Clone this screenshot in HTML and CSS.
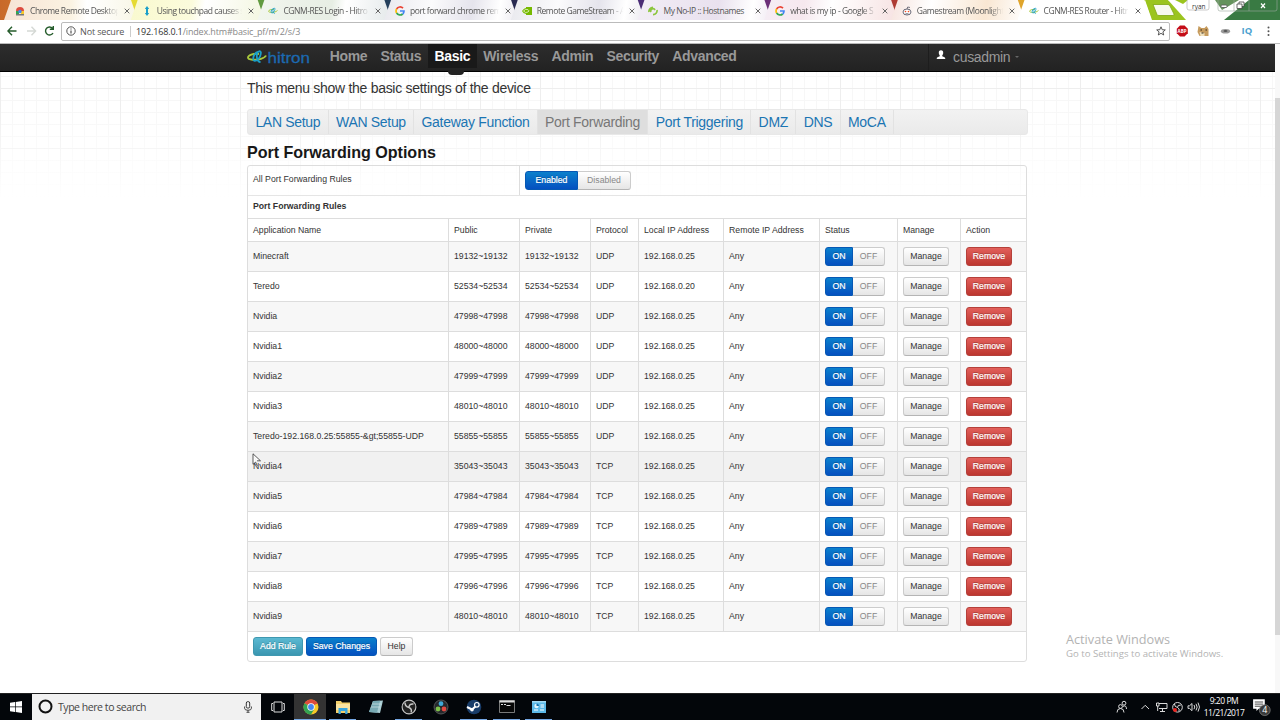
FILE: index.html
```
<!DOCTYPE html>
<html lang="en">

<head>
    <meta charset="UTF-8">
    <meta name="viewport" content="width=device-width, initial-scale=1.0">
    <title>CGNM-RES Router - Hitron Technologies</title>
    <link rel="stylesheet" href="styles.css">
</head>

<body>
    <svg class="symbols" width="0" height="0">
        <symbol id="google" viewBox="0 0 10 10">
            <g fill="none" stroke-width="1.7">
                <path d="M8 2.2A4 4 0 0 0 1.6 3" stroke="#ea4335" />
                <path d="M1.6 3a4 4 0 0 0 0 4" stroke="#fbbc05" />
                <path d="M1.6 7A4 4 0 0 0 7.7 8" stroke="#34a853" />
                <path d="M7.7 8A4 4 0 0 0 9 5H5" stroke="#4285f4" />
            </g>
        </symbol>
        <symbol id="hitron" viewBox="0 0 20 14">
            <g fill="none">
                <path d="M12 4C6 3 1 5.500 1 7.500c0 2.500 8 3 13 1.300 3-1 4.500-2 5-3.300" stroke="#a8c83c" stroke-width="1.900" />
                <path d="M11 2C8 2.500 5.500 7 6.500 10c.8 2 5 .5 6.500-3.500S14 1 12 1.300s-2.500 4-2 6.700 1.500 4 3.500 4" stroke="#1a9fc8" stroke-width="1.800" />
            </g>
        </symbol>
        <symbol id="close" viewBox="0 0 6 6">
            <path d="M.7.7l4.600 4.600M5.300.7L.7 5.300" stroke="#666" stroke-width="1" />
        </symbol>
        <symbol id="chrome" viewBox="0 0 16 16">
            <circle cx="8" cy="8" r="7.500" fill="#f7c928" />
            <path d="M8 8L1.500 4.200A7.500 7.500 0 0 1 14.500 4.200z" fill="#dd4b3e" />
            <path d="M8 8L1.500 4.200A7.500 7.500 0 0 0 8 15.500l3-5z" fill="#33a352" />
            <path d="M8 4.300h6.600" stroke="#dd4b3e" />
            <circle cx="8" cy="8" r="3.700" fill="#fff" />
            <circle cx="8" cy="8" r="2.900" fill="#4688f1" />
        </symbol>
    </svg>

    <div class="tab-strip">
        <div class="tab tab-orange">
            <svg class="favicon" viewBox="0 0 10 10"><path d="M1 5a4 4 0 0 1 8 0z" fill="#dd4b3e" /><path d="M1 5h3v3H1z" fill="#33a352" /><path d="M6 5h3v3H6z" fill="#f7c928" /><circle cx="5" cy="5.500" r="1.700" fill="#4688f1" /><path d="M1 8h8v1.500H1z" fill="#777" /></svg>
            <span class="tab-title">Chrome Remote Desktop</span><svg class="tab-close"><use href="#close" /></svg>
        </div>
        <div class="tab tab-yellow">
            <svg class="favicon" viewBox="0 0 10 10"><path d="M5 0l2.200 3H6v4h1.200L5 10 2.800 7H4V3H2.800z" fill="#1b9fc9" /></svg>
            <span class="tab-title">Using touchpad causes s</span><svg class="tab-close"><use href="#close" /></svg>
        </div>
        <div class="tab tab-green">
            <svg class="favicon"><use href="#hitron" /></svg>
            <span class="tab-title">CGNM-RES Login - Hitro</span><svg class="tab-close"><use href="#close" /></svg>
        </div>
        <div class="tab tab-gray">
            <svg class="favicon"><use href="#google" /></svg>
            <span class="tab-title">port forward chrome rem</span><svg class="tab-close"><use href="#close" /></svg>
        </div>
        <div class="tab tab-gray">
            <svg class="favicon" viewBox="0 0 10 10"><path d="M0 5q2-3 4-3V1h6v8H4V8Q1 7.500 0 5z" fill="#76b900" /><path d="M1.500 5q2-2.500 4.500-1.300Q8 5 6 6 3.500 7.500 1.500 5z" fill="none" stroke="#e8f5cf" stroke-width=".8" /></svg>
            <span class="tab-title">Remote GameStream - A</span><svg class="tab-close"><use href="#close" /></svg>
        </div>
        <div class="tab tab-lilac">
            <svg class="favicon" viewBox="0 0 10 10"><path d="M1 6A4 4 0 0 1 5 1.300M9 4a4 4 0 0 1-4 4.700M3 6a2.200 2.200 0 0 1 4-2" fill="none" stroke="#8dc63f" stroke-width="1.700" /></svg>
            <span class="tab-title full">My No-IP :: Hostnames</span><svg class="tab-close"><use href="#close" /></svg>
        </div>
        <div class="tab tab-pink">
            <svg class="favicon"><use href="#google" /></svg>
            <span class="tab-title">what is my ip - Google S</span><svg class="tab-close"><use href="#close" /></svg>
        </div>
        <div class="tab tab-peach">
            <svg class="favicon" viewBox="0 0 10 10"><ellipse cx="5" cy="6" rx="4" ry="3" fill="#fff" stroke="#445" stroke-width=".8" /><path d="M5 3l.7-2L8 1.500" stroke="#445" stroke-width=".7" fill="none" /><circle cx="3.500" cy="5.500" r=".8" fill="#f54a1d" /><circle cx="6.500" cy="5.500" r=".8" fill="#f54a1d" /><path d="M3.500 7.300q1.500 1 3 0" stroke="#445" stroke-width=".6" fill="none" /></svg>
            <span class="tab-title">Gamestream (Moonlight</span><svg class="tab-close"><use href="#close" /></svg>
        </div>
        <div class="tab tab-active">
            <svg class="favicon"><use href="#hitron" /></svg>
            <span class="tab-title">CGNM-RES Router - Hitr</span><svg class="tab-close"><use href="#close" /></svg>
        </div>
        <svg class="window-corner" viewBox="0 0 135 20" preserveAspectRatio="none">
            <path d="M0 0h135v20H0z" fill="#fff" />
            <path d="M0 0h23l18 20H7z" fill="#9bc41e" />
            <path d="M23 0h45L45 12z" fill="#fff" />
            <path d="M30 0h13l-5 4z" fill="#9bc41e" />
            <path d="M70 0h24l-17 10z" fill="#65935d" />
            <path d="M104 0h31v20H79z" fill="#397a43" />
            <path d="M8 4.500h15q1.500 0 2 1.500l4 8q.5 1.500-1 1.500H14q-1.500 0-2-1z" fill="#f7f9ed" stroke="#7ea611" stroke-width=".8" />
            <rect x="42" y="-2" width="22" height="12" rx="2" fill="#fff" fill-opacity=".5" stroke="#aaa" stroke-width=".6" />
            <text x="47" y="8.500" class="profile-name">ryan</text>
            <path d="M73 0v9q0 2 2 2h55q2 0 2-2V0M89 0v11M104 0v11" stroke="#9baa9e" stroke-width=".6" fill="none" />
            <rect x="76" y="5" width="6" height="2.500" rx="1" fill="#fff" stroke="#555" stroke-width=".8" />
            <path d="M92 4h5v4.500h-5zM94 4V2h5v4.500h-2" fill="#fff" stroke="#444" stroke-width=".8" />
            <path d="M116 3.500l4 4.500m0-4.500L116 8" stroke="#fff" stroke-width="1.200" />
        </svg>
    </div>

    <div class="toolbar">
        <svg class="nav-icons" viewBox="0 0 50 12">
            <g fill="none" stroke-width="1.400">
                <path d="M9.500 6H1M5 1.800L.9 6 5 10.200" stroke="#255c2b" />
                <path d="M20 6h8.500M24.500 1.800L28.600 6l-4.100 4.200" stroke="#d5d9d5" />
                <path d="M45.500 3.300A4 4 0 1 0 46 8M46.300 1v3.300h-3.500" stroke="#255c2b" />
            </g>
        </svg>
        <div class="address">
            <svg class="info" viewBox="0 0 10 10"><circle cx="5" cy="5" r="4.200" fill="none" stroke="#444" stroke-width=".9" /><path d="M5 4.400v3M5 2.400v1" stroke="#444" stroke-width="1.100" /></svg>
            <span class="not-secure">Not secure</span>
            <span class="url">192.168.0.1<span>/index.htm#basic_pf/m/2/s/3</span></span>
            <svg class="star" viewBox="0 0 10 10"><path d="M5 .8l1.200 2.900 3.100.2-2.400 2 .8 3.100L5 7.300 2.300 9l.8-3.100-2.400-2 3.100-.2z" fill="none" stroke="#444" stroke-width=".9" /></svg>
        </div>
        <svg class="extensions" viewBox="0 0 110 14">
            <path d="M10 1.500h4.600l3.200 3.200v4.600l-3.200 3.200H10L6.800 9.300V4.700z" fill="#c40d18" />
            <text x="7.600" y="8.800" class="abp">ABP</text>
            <path d="M28.500 2l3 2h3l2-2 2 3v7h-9l-2-4z" fill="#c69b5d" />
            <path d="M29.500 8l5 1v3h-4z" fill="#eee0bd" /><path d="M30.500 6h1.500M35.500 6H37M31.500 9h2" stroke="#34281b" />
            <ellipse cx="55.500" cy="7.300" rx="4.600" ry="2.300" fill="#999" /><ellipse cx="55.500" cy="7" rx="2" ry="1" fill="#555" />
            <text x="71.500" y="10.300" class="iq">IQ</text>
            <g fill="#555"><circle cx="98.500" cy="3.500" r="1" /><circle cx="98.500" cy="7.300" r="1" /><circle cx="98.500" cy="11" r="1" /></g>
        </svg>
    </div>

    <div class="viewport">
        <div class="navbar">
            <svg class="logo" viewBox="0 0 64 16">
                <use href="#hitron" x="0" y="1" width="20" height="14" />
                <text x="20.500" y="13.500" textLength="42.500" lengthAdjust="spacingAndGlyphs">hitron</text>
            </svg>
            <ul class="main-nav">
                <li>Home</li>
                <li>Status</li>
                <li class="active">Basic</li>
                <li>Wireless</li>
                <li>Admin</li>
                <li>Security</li>
                <li>Advanced</li>
            </ul>
            <div class="user">
                <svg class="user-icon" viewBox="0 0 10 10"><path d="M5 .3c1.600 0 2.300 1 2.200 2.600C7.100 4.200 6.500 5 6.200 5.500v.8C8 7 9.300 7.200 9.300 9H.7c0-1.800 1.300-2 3.100-2.700v-.8C3.500 5 2.900 4.200 2.800 2.900 2.700 1.300 3.400.3 5 .3z" fill="#fff" /></svg>
                <span>cusadmin</span>
                <i class="caret"></i>
            </div>
            <div class="heading-tail"></div>
        </div>

        <div class="container">
            <p class="lead">This menu show the basic settings of the device</p>
            <ul class="sub-nav">
                <li>LAN Setup</li>
                <li>WAN Setup</li>
                <li>Gateway Function</li>
                <li class="active">Port Forwarding</li>
                <li>Port Triggering</li>
                <li>DMZ</li>
                <li>DNS</li>
                <li>MoCA</li>
            </ul>
            <h3>Port Forwarding Options</h3>

            <div class="panel">
                <div class="all-rules">
                    <div class="all-rules-label">All Port Forwarding Rules</div>
                    <div class="btn-group wide"><span class="btn btn-primary">Enabled</span><span class="btn off">Disabled</span></div>
                </div>
                <div class="rules-title">Port Forwarding Rules</div>
                <table class="rules">
                    <colgroup>
                        <col class="c-name"><col class="c-public"><col class="c-private"><col class="c-protocol"><col class="c-local"><col class="c-remote"><col class="c-status"><col class="c-manage"><col class="c-action">
                    </colgroup>
                    <thead>
                        <tr><th>Application Name</th><th>Public</th><th>Private</th><th>Protocol</th><th>Local IP Address</th><th>Remote IP Address</th><th>Status</th><th>Manage</th><th>Action</th></tr>
                    </thead>
                    <tbody>
                        <tr>
                            <td>Minecraft</td><td>19132~19132</td><td>19132~19132</td><td>UDP</td><td>192.168.0.25</td><td>Any</td>
                            <td><div class="btn-group"><span class="btn btn-primary">ON</span><span class="btn off">OFF</span></div></td>
                            <td><span class="btn">Manage</span></td><td><span class="btn btn-danger">Remove</span></td>
                        </tr>
                        <tr>
                            <td>Teredo</td><td>52534~52534</td><td>52534~52534</td><td>UDP</td><td>192.168.0.20</td><td>Any</td>
                            <td><div class="btn-group"><span class="btn btn-primary">ON</span><span class="btn off">OFF</span></div></td>
                            <td><span class="btn">Manage</span></td><td><span class="btn btn-danger">Remove</span></td>
                        </tr>
                        <tr>
                            <td>Nvidia</td><td>47998~47998</td><td>47998~47998</td><td>UDP</td><td>192.168.0.25</td><td>Any</td>
                            <td><div class="btn-group"><span class="btn btn-primary">ON</span><span class="btn off">OFF</span></div></td>
                            <td><span class="btn">Manage</span></td><td><span class="btn btn-danger">Remove</span></td>
                        </tr>
                        <tr>
                            <td>Nvidia1</td><td>48000~48000</td><td>48000~48000</td><td>UDP</td><td>192.168.0.25</td><td>Any</td>
                            <td><div class="btn-group"><span class="btn btn-primary">ON</span><span class="btn off">OFF</span></div></td>
                            <td><span class="btn">Manage</span></td><td><span class="btn btn-danger">Remove</span></td>
                        </tr>
                        <tr>
                            <td>Nvidia2</td><td>47999~47999</td><td>47999~47999</td><td>UDP</td><td>192.168.0.25</td><td>Any</td>
                            <td><div class="btn-group"><span class="btn btn-primary">ON</span><span class="btn off">OFF</span></div></td>
                            <td><span class="btn">Manage</span></td><td><span class="btn btn-danger">Remove</span></td>
                        </tr>
                        <tr>
                            <td>Nvidia3</td><td>48010~48010</td><td>48010~48010</td><td>UDP</td><td>192.168.0.25</td><td>Any</td>
                            <td><div class="btn-group"><span class="btn btn-primary">ON</span><span class="btn off">OFF</span></div></td>
                            <td><span class="btn">Manage</span></td><td><span class="btn btn-danger">Remove</span></td>
                        </tr>
                        <tr>
                            <td>Teredo-192.168.0.25:55855-&amp;gt;55855-UDP</td><td>55855~55855</td><td>55855~55855</td><td>UDP</td><td>192.168.0.25</td><td>Any</td>
                            <td><div class="btn-group"><span class="btn btn-primary">ON</span><span class="btn off">OFF</span></div></td>
                            <td><span class="btn">Manage</span></td><td><span class="btn btn-danger">Remove</span></td>
                        </tr>
                        <tr class="hover">
                            <td>Nvidia4</td><td>35043~35043</td><td>35043~35043</td><td>TCP</td><td>192.168.0.25</td><td>Any</td>
                            <td><div class="btn-group"><span class="btn btn-primary">ON</span><span class="btn off">OFF</span></div></td>
                            <td><span class="btn">Manage</span></td><td><span class="btn btn-danger">Remove</span></td>
                        </tr>
                        <tr>
                            <td>Nvidia5</td><td>47984~47984</td><td>47984~47984</td><td>TCP</td><td>192.168.0.25</td><td>Any</td>
                            <td><div class="btn-group"><span class="btn btn-primary">ON</span><span class="btn off">OFF</span></div></td>
                            <td><span class="btn">Manage</span></td><td><span class="btn btn-danger">Remove</span></td>
                        </tr>
                        <tr>
                            <td>Nvidia6</td><td>47989~47989</td><td>47989~47989</td><td>TCP</td><td>192.168.0.25</td><td>Any</td>
                            <td><div class="btn-group"><span class="btn btn-primary">ON</span><span class="btn off">OFF</span></div></td>
                            <td><span class="btn">Manage</span></td><td><span class="btn btn-danger">Remove</span></td>
                        </tr>
                        <tr>
                            <td>Nvidia7</td><td>47995~47995</td><td>47995~47995</td><td>TCP</td><td>192.168.0.25</td><td>Any</td>
                            <td><div class="btn-group"><span class="btn btn-primary">ON</span><span class="btn off">OFF</span></div></td>
                            <td><span class="btn">Manage</span></td><td><span class="btn btn-danger">Remove</span></td>
                        </tr>
                        <tr>
                            <td>Nvidia8</td><td>47996~47996</td><td>47996~47996</td><td>TCP</td><td>192.168.0.25</td><td>Any</td>
                            <td><div class="btn-group"><span class="btn btn-primary">ON</span><span class="btn off">OFF</span></div></td>
                            <td><span class="btn">Manage</span></td><td><span class="btn btn-danger">Remove</span></td>
                        </tr>
                        <tr>
                            <td>Nvidia9</td><td>48010~48010</td><td>48010~48010</td><td>TCP</td><td>192.168.0.25</td><td>Any</td>
                            <td><div class="btn-group"><span class="btn btn-primary">ON</span><span class="btn off">OFF</span></div></td>
                            <td><span class="btn">Manage</span></td><td><span class="btn btn-danger">Remove</span></td>
                        </tr>
                    </tbody>
                </table>
                <div class="actions">
                    <span class="btn btn-info">Add Rule</span>
                    <span class="btn btn-primary btn-save">Save Changes</span>
                    <span class="btn btn-help">Help</span>
                </div>
            </div>
        </div>
        <div class="scrollbar"></div>
    </div>

    <div class="taskbar">
        <div class="start">
            <svg width="12" height="12" viewBox="0 0 12 12"><path d="M0 1.700l5-.7v4.600H0zM5.700.9L12 0v5.600H5.700zM0 6.300h5v4.600l-5-.7zM5.700 6.300H12V12l-6.300-.9z" fill="#fff" /></svg>
        </div>
        <div class="search">
            <svg width="15" height="15" viewBox="0 0 15 15"><circle cx="7.500" cy="7.500" r="6" fill="none" stroke="#111" stroke-width="2" /></svg>
            <span>Type here to search</span>
            <svg width="8" height="12" viewBox="0 0 8 12"><rect x="2.300" y=".6" width="3.400" height="6.500" rx="1.500" fill="none" stroke="#333" /><path d="M.6 5.500v1.800q0 2 3.400 2t3.400-2V5.500M4 9.300V11M2.500 11.300h3" fill="none" stroke="#333" stroke-width=".9" /></svg>
        </div>
        <div class="task">
            <svg width="14" height="12" viewBox="0 0 14 12"><path d="M3 1h8v10H3zM2 2.500H.7v7H2M12 2.500h1.300v7H12" fill="none" stroke="#ddd" /></svg>
        </div>
        <div class="task current"><svg width="16" height="16"><use href="#chrome" /></svg></div>
        <div class="task open">
            <svg width="16" height="14" viewBox="0 0 16 14"><path d="M1 1h5l1 1.500h8V13H1z" fill="#f3cf6b" /><path d="M1 4h14v6H1z" fill="#fae3a0" /><path d="M3.500 14V8h9v6h-2.300v-3H5.800v3z" fill="#39a5dd" /></svg>
        </div>
        <div class="task">
            <svg width="16" height="16" viewBox="0 0 16 16"><path d="M5 2l10-.5-3 12.500-11-1z" fill="#a9cdd3" /><path d="M5 2l7-.3-3 12L1 13z" fill="#78aab3" /><path d="M4 5h9M3 8h9" stroke="#d3e6e8" stroke-width=".7" /></svg>
        </div>
        <div class="task open">
            <svg width="16" height="16" viewBox="0 0 16 16"><circle cx="8" cy="8" r="6.900" fill="#222" stroke="#c8c8c8" stroke-width="1.100" /><path d="M8 8.500Q4 7.500 4 3.500M8 8.500q0-4 4.500-3.500M8 8.500q3.500 1.500 2 5" fill="none" stroke="#c8c8c8" stroke-width="1.400" /></svg>
        </div>
        <div class="task">
            <svg width="16" height="16" viewBox="0 0 16 16"><circle cx="8" cy="8" r="7" fill="#26292d" stroke="#656565" stroke-width=".8" /><circle cx="8" cy="4.700" r="2.400" fill="#3fa9d8" /><circle cx="5" cy="10" r="2.400" fill="#7fc24a" /><circle cx="11" cy="10" r="2.400" fill="#e34a42" /></svg>
        </div>
        <div class="task open">
            <svg width="16" height="16" viewBox="0 0 16 16"><circle cx="8" cy="8" r="7.300" fill="#193d6a" /><path d="M1 8l5 2.500L10 7" stroke="#fff" stroke-width="2" fill="none" /><circle cx="10.800" cy="5.800" r="2.300" fill="#193d6a" stroke="#fff" stroke-width="1.200" /><circle cx="6" cy="10.800" r="1.800" fill="#fff" /></svg>
        </div>
        <div class="task open">
            <svg width="16" height="13" viewBox="0 0 16 13"><path d="M.5.500h15v12H.5z" fill="#080808" stroke="#aaa" stroke-width=".7" /><path d="M.5 1.500h15" stroke="#ddd" stroke-width="2" /><path d="M2 4.500h2M5 4.500h2M7.500 5.500h4" stroke="#ddd" /></svg>
        </div>
        <div class="task open">
            <svg width="14" height="12" viewBox="0 0 14 12"><path d="M0 0h14v12H0z" fill="#5cb9e8" /><path d="M0 0h14v1.500H0z" fill="#a3daf3" /><circle cx="4.500" cy="5" r="2.200" fill="#e2f4fc" /><path d="M4.500 5V2.500A2.500 2.500 0 0 1 7 5z" fill="#1672ac" /><path d="M8.500 4H12M8.500 6H12M2 9h4M8 9h4" stroke="#fff" /></svg>
        </div>

        <div class="tray">
            <svg class="tray-icons" viewBox="0 0 86 14">
                <g fill="none" stroke="#e5e5e5" stroke-width=".95">
                    <circle cx="4.500" cy="6.500" r="1.900" /><path d="M1 12.500q0-4 3.500-4t3.500 4" /><circle cx="8" cy="3.200" r="1.900" /><path d="M6.800 6.500q3.500-2 3.700 2.500" />
                    <path d="M25.500 9l3.700-3.700L33 9" />
                    <path d="M43 3.500h8v5h-8M46.500 9v2.500m-2.500 0h5M40.500 3h2.500v3h-2.500zM41.700 6v5" />
                    <circle cx="61.500" cy="7.300" r="4.800" /><path d="M61.500 7.500q-3-.5-3-3.500M61.500 7.500q0-3 3.200-2.300M61.500 7.500q2.500 1 1.500 3.700" />
                    <path d="M72 5.800h1.500L76 3.500v7.200l-2.500-2.300H72zM78 5q1.500 2 0 4.200M80 3.800q2.300 3.300 0 6.600M82 2.600q3 4.500 0 9" />
                </g>
                <circle cx="59" cy="10" r="2" fill="#e8251f" />
            </svg>
            <div class="clock"><span>9:20 PM</span><span>11/21/2017</span></div>
            <svg class="notice" viewBox="0 0 18 18">
                <path d="M1 2h10.500v8.500H6L4 12.700v-2.200H1z" fill="#fff" /><path d="M2.500 4.500H10M2.500 6.400H10M2.500 8.300H8" stroke="#333" stroke-width=".8" />
                <circle cx="11.500" cy="11.800" r="4.900" fill="#3b3b3b" stroke="#888" stroke-width=".6" /><text x="9.300" y="14.700">4</text>
            </svg>
        </div>
    </div>

    <div class="watermark"><b>Activate Windows</b><span>Go to Settings to activate Windows.</span></div>
    <svg class="cursor" viewBox="0 0 10 14"><path d="M1 .8v10.500l2.600-2.200 1.700 3.700M1 .8l7.500 7H5" fill="#fff" stroke="#333" stroke-width=".8" /></svg>
</body>

</html>
```
FILE: styles.css
```
* {
    box-sizing: border-box;
}

body {
    margin: 0;
    width: 1280px;
    height: 720px;
    overflow: hidden;
    display: flex;
    flex-direction: column;
    background: #fff;
    color: #333;
    font-family: "Liberation Sans", Arial, sans-serif;
    font-size: 8.71px;
}

ul,
p,
h3 {
    margin: 0;
    padding: 0;
    list-style: none;
}

svg {
    display: block;
    flex: none;
}

.symbols {
    position: absolute;
}

/* browser */
.tab-strip {
    display: flex;
    height: 20px;
    padding-left: 4px;
    background: linear-gradient(90deg, #c8692a 0, #d98f34 90px, #ecd832 125px, #d9df31 150px, #5d9638 250px, #67a04c 275px, #24435e 370px, #27294f 510px, #4b2d76 640px, #6b2f7a 765px, #9c3541 870px, #b23c30 900px, #e0a42c 1020px, #9bc41e 1150px);
    font-family: "Open Sans", sans-serif;
}

.tab {
    flex: none;
    display: flex;
    align-items: center;
    width: 133.700px;
    height: 20px;
    margin-right: -7px;
    padding: 1px 10px 0 11px;
    clip-path: polygon(7px 0, 127px 0, 134px 100%, 0 100%);
    color: #555;
    font-size: 8.500px;
}

.tab-orange {
    background: linear-gradient(90deg, #f6e3d5, #fbf3e2 50%, #fff 62%, #f8f6e6);
}

.tab-yellow {
    background: linear-gradient(100deg, #f9f9cf, #fbfbdc 45%, #fff 55%, #f3f6e0);
}

.tab-green {
    background: linear-gradient(100deg, #f2f6ee, #e7eee4 55%, #fff 65%, #e4e9ea);
}

.tab-gray {
    background: linear-gradient(100deg, #e9e9ee, #fbfbfc 35%, #e5e4ec 65%, #fff 85%, #ebe9ef);
}

.tab-lilac {
    background: linear-gradient(100deg, #f2edf6, #e9e1ee 60%, #fff 85%, #f1eaf3);
}

.tab-pink {
    background: linear-gradient(100deg, #f5edf5, #f6e8ee 30%, #fff 50%, #f6e2e2);
}

.tab-peach {
    background: linear-gradient(100deg, #f6e4df, #fff 30%, #f9e7d3 70%, #fff);
}

.tab-active {
    background: #fff;
}

.favicon {
    width: 10px;
    height: 10px;
}

.tab-title {
    flex: 1;
    margin: 0 4px 0 5px;
    white-space: nowrap;
    letter-spacing: -0.450px;
    -webkit-mask-image: linear-gradient(90deg, #000 82%, transparent 98%);
    mask-image: linear-gradient(90deg, #000 82%, transparent 98%);
}

.tab-title.full {
    -webkit-mask-image: none;
    mask-image: none;
}

.tab-close {
    width: 6px;
    height: 6px;
}

.window-corner {
    width: 135px;
    height: 20px;
    margin-left: auto;
}

.profile-name {
    font-size: 6.500px;
    fill: #333;
}

.toolbar {
    display: flex;
    align-items: center;
    flex: none;
    height: 24px;
    padding: 0 0 1px 7px;
    background: #fff;
    border-bottom: 1px solid #bbb;
    font-family: "Open Sans", sans-serif;
}

.nav-icons {
    width: 50px;
    height: 12px;
    margin-right: 4px;
}

.address {
    display: flex;
    align-items: center;
    width: 1110px;
    height: 19px;
    padding: 0 3px 0 4px;
    border: 1px solid #bbb;
    border-radius: 2px;
    font-size: 9px;
    letter-spacing: -0.150px;
}

.info {
    width: 10px;
    height: 10px;
    margin-right: 4px;
}

.not-secure {
    width: 51px;
    border-right: 1px solid #ccc;
    line-height: 11px;
    color: #555;
}

.url {
    margin-left: 5px;
    color: #333;
}

.url span {
    color: #888;
}

.star {
    width: 10px;
    height: 10px;
    margin-left: auto;
}

.extensions {
    width: 110px;
    height: 14px;
}

.abp {
    font-size: 4.500px;
    font-weight: bold;
    fill: #fff;
}

.iq {
    font-size: 9.500px;
    font-weight: bold;
    fill: #4c9fd0;
}

/* router page */
.viewport {
    position: relative;
    flex: none;
    height: 649px;
    background:
        linear-gradient(rgba(255, 255, 255, 0) 60px, #fff 155px),
        linear-gradient(90deg, #eee 1px, transparent 1px) 0 0 / 60px 60px,
        linear-gradient(#eee 1px, transparent 1px) 0 44px / 60px 60px,
        linear-gradient(90deg, #f7f7f7 1px, transparent 1px) 0 0 / 12px 12px,
        linear-gradient(#f7f7f7 1px, transparent 1px) 0 8px / 12px 12px;
}

.navbar {
    position: relative;
    display: flex;
    width: 1275px;
    height: 28px;
    padding-left: 247px;
    background: linear-gradient(#2d2d2d, #222);
    border-bottom: 1px solid #000;
    color: #999;
    font-size: 14px;
    letter-spacing: -0.330px;
    line-height: 25px;
}

.logo {
    width: 64px;
    height: 16px;
    margin: 5px 12px 0 0;
}

.logo text {
    fill: #1c6ab0;
    font-size: 15.500px;
    letter-spacing: 0;
    stroke: #1c6ab0;
    stroke-width: 0.300px;
}

.main-nav {
    display: flex;
    font-weight: bold;
}

.main-nav li {
    padding: 0 6.500px 0 6.700px;
}

.main-nav .active {
    height: 24px;
    background: #191919;
    color: #fff;
}

.user {
    display: flex;
    align-items: center;
    width: 110px;
    height: 27px;
    margin-left: auto;
    margin-right: 237px;
    padding-left: 7px;
    border-left: 1px solid #1d1d1d;
}

.user-icon {
    width: 10px;
    height: 10px;
    margin: 0 7px 5px 0;
}

.caret {
    margin-left: 5px;
    margin-bottom: 2px;
    border: 2.500px solid transparent;
    border-top-color: #666;
    border-bottom: 0;
}

.heading-tail {
    position: absolute;
    left: 448px;
    top: 27px;
    width: 16px;
    height: 4px;
    background: #222;
    border-radius: 0 0 8px 8px;
}

.container {
    width: 781px;
    margin-left: 247px;
}

.lead {
    padding-top: 7px;
    font-size: 14px;
    letter-spacing: -0.290px;
    line-height: 19px;
}

.sub-nav {
    display: flex;
    height: 26px;
    margin-top: 11px;
    background: linear-gradient(#f2f2f2, #eaeaea);
    border: 1px solid #e8e8e8;
    border-radius: 3px;
    font-size: 14px;
    letter-spacing: -0.310px;
    line-height: 24px;
}

.sub-nav li {
    padding: 0 7.300px 0 7.400px;
    border-right: 1px solid #e2e2e2;
    color: #1b75b3;
    white-space: nowrap;
}

.sub-nav .active {
    background: #dedede;
    color: #777;
}

h3 {
    height: 30px;
    color: #181818;
    font-size: 16.100px;
    letter-spacing: -0.030px;
    line-height: 35px;
    white-space: nowrap;
}

.panel {
    width: 780px;
    height: 497px;
    border: 1px solid #ddd;
    border-radius: 3px;
}

.all-rules {
    display: flex;
    align-items: center;
    height: 30px;
    border-bottom: 1px solid #e5e5e5;
}

.all-rules-label {
    width: 272px;
    height: 29px;
    padding-left: 5px;
    border-right: 1px solid #ddd;
    line-height: 27px;
}

.rules-title {
    height: 23px;
    padding-left: 5px;
    border-bottom: 1px solid #ddd;
    font-weight: bold;
    line-height: 21px;
}

.rules {
    width: 778px;
    table-layout: fixed;
    border-collapse: separate;
    border-spacing: 0;
}

.c-name { width: 201px; }
.c-public { width: 71px; }
.c-private { width: 71px; }
.c-protocol { width: 48px; }
.c-local { width: 85px; }
.c-remote { width: 96px; }
.c-status { width: 78px; }
.c-manage { width: 63px; }
.c-action { width: 65px; }

.rules th,
.rules td {
    height: 30px;
    padding: 0 0 1px 5px;
    border-right: 1px solid #ddd;
    border-bottom: 1px solid #ddd;
    font-weight: normal;
    text-align: left;
    vertical-align: middle;
    white-space: nowrap;
}

.rules th {
    height: 23px;
    padding-bottom: 0;
}

.rules th:last-child,
.rules td:last-child {
    border-right: 0;
}

.rules tbody tr:nth-child(odd) {
    background: #f7f7f7;
}

.rules tbody .hover {
    background: #f1f1f1;
}

.btn-group {
    display: flex;
}

.btn {
    display: block;
    width: 46px;
    height: 19px;
    background: linear-gradient(#fff, #e6e6e6);
    border: 1px solid #ccc;
    border-bottom-color: #b5b5b5;
    border-radius: 3px;
    line-height: 17px;
    text-align: center;
    color: #333;
}

.btn-group .btn {
    width: 32px;
    border-radius: 0 3px 3px 0;
}

.btn-group .btn-primary {
    width: 28px;
    border-radius: 3px 0 0 3px;
}

.btn-group.wide {
    margin-left: 5px;
}

.btn-group.wide .btn {
    width: 53px;
}

.btn.off {
    border-left: 0;
    color: #888;
}

.btn-primary,
.btn-danger,
.btn-info {
    color: #fff;
    text-shadow: 0 -1px 0 rgba(0, 0, 0, 0.25);
    -webkit-text-stroke: 0.200px #fff;
}

.btn-primary {
    background: linear-gradient(#0a80cc, #0550c0);
    border-color: #0658b4;
}

.btn-danger {
    background: linear-gradient(#e2605b, #bd362f);
    border-color: #b5403a;
}

.btn-info {
    width: 50px;
    background: linear-gradient(#5bb9d2, #3a96b0);
    border-color: #3f98b0;
}

.actions {
    display: flex;
    gap: 3px;
    padding: 5px;
}

.btn-save {
    width: 71px;
}

.btn-help {
    width: 33px;
}

.scrollbar {
    position: absolute;
    right: 0;
    top: 0;
    width: 5px;
    height: 649px;
    background: linear-gradient(#d6d6d6, #d6d6d6) 0 54px / 5px 537px no-repeat #f8f8f8;
}

/* windows */
.taskbar {
    display: flex;
    flex: none;
    height: 27px;
    background: #03060a;
    border-top: 1px solid #222;
    font-family: "Open Sans", sans-serif;
}

.start,
.task {
    display: flex;
    align-items: center;
    justify-content: center;
    width: 32px;
}

.search {
    display: flex;
    align-items: center;
    width: 229px;
    padding: 0 9px 1px 6px;
    background: #f1f1f1;
    color: #444;
    font-size: 10.500px;
}

.search span {
    flex: 1;
    margin-left: 5px;
    letter-spacing: -0.450px;
}

.task {
    width: 32.700px;
    padding: 0 0 1px 1px;
}

.task.open {
    background: linear-gradient(#76a9e6, #76a9e6) 50% 100% / 27px 1.500px no-repeat;
}

.task.current {
    background: linear-gradient(#76a9e6, #76a9e6) 0 100% / 100% 1.500px no-repeat #333;
}

.tray {
    display: flex;
    align-items: center;
    margin-left: auto;
    color: #fff;
}

.tray-icons {
    width: 86px;
    height: 14px;
}

.clock {
    display: flex;
    flex-direction: column;
    align-items: center;
    width: 44px;
    font-size: 8.500px;
    line-height: 12px;
    letter-spacing: -0.450px;
}

.notice {
    width: 20px;
    height: 20px;
    margin: 0 8px 0 6px;
}

.notice text {
    font-size: 8px;
    fill: #fff;
}

.watermark {
    position: absolute;
    left: 1066px;
    top: 631px;
    display: flex;
    flex-direction: column;
    color: #b3b3b3;
    font-family: "Open Sans", sans-serif;
    font-size: 9.600px;
    line-height: 14px;
    white-space: nowrap;
}

.watermark b {
    font-size: 12.700px;
    font-weight: normal;
    line-height: 16px;
}

.cursor {
    position: absolute;
    left: 252px;
    top: 453px;
    width: 10px;
    height: 14px;
}
```
